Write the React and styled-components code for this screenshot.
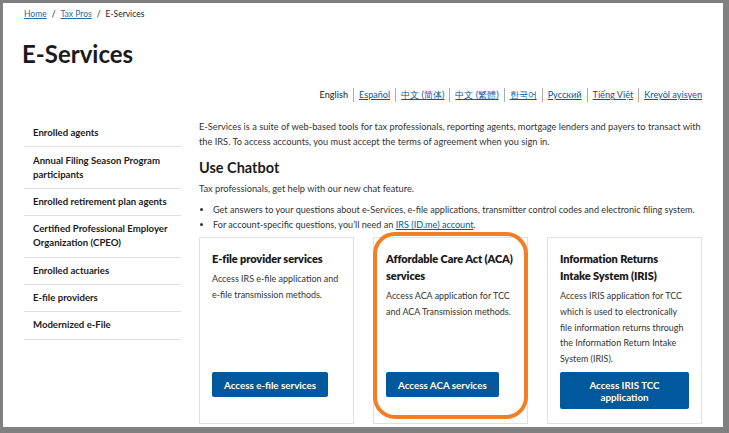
import React from "react";
import styled, { createGlobalStyle } from "styled-components";

const GlobalStyle = createGlobalStyle`
  html, body {
    margin: 0;
    padding: 0;
    background: #808080;
  }
  body {
    font-family: Lato, "Liberation Sans", sans-serif;
    color: #1b1b1b;
  }
`;

const Frame = styled.div`
  width: 720px;
  height: 424px;
  margin: 3px 0 0 3px;
  background: #fff;
  overflow: hidden;
  box-sizing: border-box;
  padding: 0 21px;
`;

const Breadcrumb = styled.nav`
  display: flex;
  align-items: center;
  gap: 5px;
  padding-top: 5px;
  font-size: 8.5px;
  line-height: 12px;
  color: #1b1b1b;

  a {
    color: #2a6c9c;
    text-decoration: underline;
  }
`;

const Title = styled.h1`
  margin: 17px 0 0 -2px;
  font-size: 24px;
  line-height: 34px;
  font-weight: 700;
  color: #1b1b1b;
`;

const LangBar = styled.ul`
  display: flex;
  justify-content: flex-end;
  list-style: none;
  margin: 17px 0 0;
  padding: 0;
  font-size: 9.15px;
  line-height: 14px;
`;

const Lang = styled.li`
  padding: 0 5px;
  border-left: ${(p) => (p.$first ? "none" : "1px solid #a9aeb1")};
  color: ${(p) => (p.$current ? "#1b1b1b" : "#00599c")};
  text-decoration: ${(p) => (p.$current ? "none" : "underline")};
  &:last-child {
    padding-right: 0;
  }
`;

const Layout = styled.div`
  display: grid;
  grid-template-columns: 157px 1fr;
  column-gap: 18px;
  margin-top: 17px;
`;

const SideNav = styled.ul`
  list-style: none;
  margin: 0;
  padding: 1px 0 0;
`;

const SideItem = styled.li`
  padding: 6.2px 6px 6.2px 9px;
  border-bottom: 1px solid #dfe1e2;
  font-size: 9.6px;
  line-height: 14px;
  font-weight: 700;
  color: #1b1b1b;
`;

const Main = styled.main`
  font-size: 9.25px;
  line-height: 15px;
  color: #333;
`;

const Para = styled.p`
  margin: ${(p) => p.$margin || "0"};
`;

const SubHeading = styled.h2`
  margin: 10px 0 0;
  font-size: 14.5px;
  line-height: 18px;
  font-weight: 700;
  color: #1b1b1b;
`;

const Bullets = styled.ul`
  margin: 6px 0 0;
  padding-left: 14px;
  font-size: 9.1px;

  a {
    color: #00599c;
  }
`;

const Cards = styled.div`
  display: grid;
  grid-template-columns: repeat(3, 1fr);
  column-gap: 19px;
  margin-top: 5px;
`;

const Card = styled.section`
  position: relative;
  display: flex;
  flex-direction: column;
  height: 187px;
  box-sizing: border-box;
  padding: 12px 12px 14px;
  border: 1px solid #dfe1e2;
`;

const CardTitle = styled.h3`
  margin: 0 -5px 0 0;
  white-space: pre-line;
  font-size: 11px;
  line-height: 17px;
  font-weight: 800;
  letter-spacing: -0.1px;
  color: #1b1b1b;
`;

const CardText = styled.p`
  margin: 4px 0 0;
  font-size: 8.95px;
  line-height: 15.8px;
  color: #333;
`;

const CardFooter = styled.div`
  margin-top: auto;
  height: 37px;
  display: flex;
  align-items: flex-start;
`;

const Button = styled.a`
  display: inline-block;
  box-sizing: border-box;
  max-width: 100%;
  padding: 6.5px 12px;
  background: #00599c;
  border-radius: 2px;
  color: #fff;
  font-size: 9.8px;
  line-height: 12px;
  font-weight: 700;
  text-align: center;
  text-decoration: none;
`;

const Highlight = styled.div`
  position: absolute;
  top: -6px;
  left: -1px;
  right: -1px;
  height: 187px;
  border: 4px solid #f37e25;
  border-radius: 22px;
  box-sizing: border-box;
  pointer-events: none;
`;

const languages = [
  "English",
  "Español",
  "中文 (简体)",
  "中文 (繁體)",
  "한국어",
  "Русский",
  "Tiếng Việt",
  "Kreyòl ayisyen",
];

const sideLinks = [
  "Enrolled agents",
  "Annual Filing Season Program participants",
  "Enrolled retirement plan agents",
  "Certified Professional Employer Organization (CPEO)",
  "Enrolled actuaries",
  "E-file providers",
  "Modernized e-File",
];

const services = [
  {
    title: "E-file provider services",
    text: "Access IRS e-file application and e-file transmission methods.",
    button: "Access e-file services",
  },
  {
    title: "Affordable Care Act (ACA)\nservices",
    text: "Access ACA application for TCC and ACA Transmission methods.",
    button: "Access ACA services",
    highlighted: true,
  },
  {
    title: "Information Returns\nIntake System (IRIS)",
    text: "Access IRIS application for TCC which is used to electronically file information returns through the Information Return Intake System (IRIS).",
    button: "Access IRIS TCC application",
  },
];

export default function App() {
  return (
    <>
      <GlobalStyle />
      <Frame>
        <Breadcrumb>
          <a href="#">Home</a>
          <span>/</span>
          <a href="#">Tax Pros</a>
          <span>/</span>
          <span>E-Services</span>
        </Breadcrumb>

        <Title>E-Services</Title>

        <LangBar>
          {languages.map((lang, i) => (
            <Lang key={lang} $first={i === 0} $current={i === 0}>
              {lang}
            </Lang>
          ))}
        </LangBar>

        <Layout>
          <SideNav>
            {sideLinks.map((link) => (
              <SideItem key={link}>{link}</SideItem>
            ))}
          </SideNav>

          <Main>
            <Para>
              E-Services is a suite of web-based tools for tax professionals, reporting agents,
              mortgage lenders and payers to transact with the IRS. To access accounts, you must
              accept the terms of agreement when you sign in.
            </Para>
            <SubHeading>Use Chatbot</SubHeading>
            <Para $margin="4px 0 0">Tax professionals, get help with our new chat feature.</Para>
            <Bullets>
              <li>
                Get answers to your questions about e-Services, e-file applications, transmitter
                control codes and electronic filing system.
              </li>
              <li>
                For account-specific questions, you’ll need an <a href="#">IRS (ID.me) account</a>.
              </li>
            </Bullets>

            <Cards>
              {services.map((s) => (
                <Card key={s.title}>
                  <CardTitle>{s.title}</CardTitle>
                  <CardText>{s.text}</CardText>
                  <CardFooter>
                    <Button href="#">{s.button}</Button>
                  </CardFooter>
                  {s.highlighted && <Highlight />}
                </Card>
              ))}
            </Cards>
          </Main>
        </Layout>
      </Frame>
    </>
  );
}
